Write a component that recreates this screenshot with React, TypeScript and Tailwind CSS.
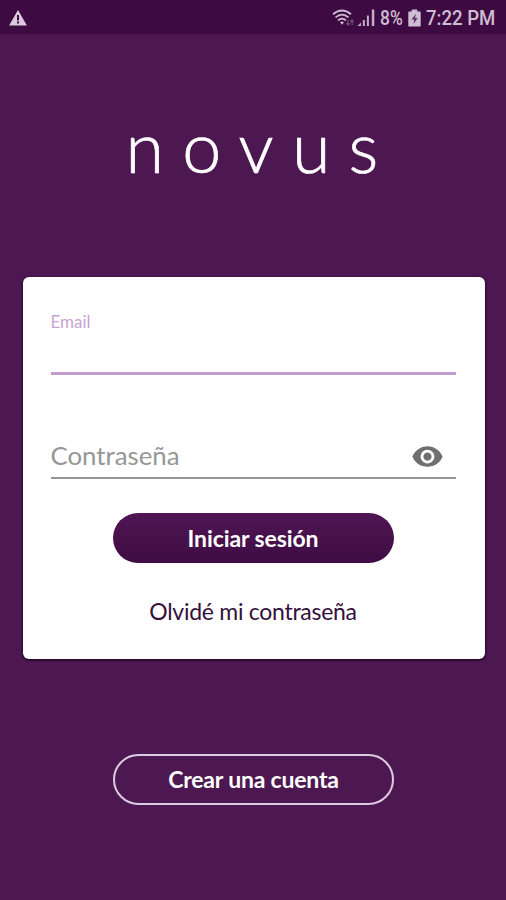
function WarningIcon() {
  return (
    <svg className="w-[18px] h-4" viewBox="0 0 18 16">
      <path d="M9 0 17.900 15.500H0.100z" fill="#dccbe0" />
      <path d="M8 5h2v5.500H8zM8 11.500h2v2H8z" fill="#3d0a42" />
    </svg>
  );
}

function WifiIcon() {
  return (
    <svg className="w-[23px] h-[18px]" viewBox="0 0 23 18" fill="none" stroke="#cdbbd1">
      <path d="M1 5.200Q10 -2.200 19 5.200" strokeWidth="1.800" />
      <path d="M3.500 8.400Q10 2.800 16.500 8.400" strokeWidth="1.800" />
      <path d="M6 11.400Q10 7.800 14 11.400" strokeWidth="1.800" />
      <path d="M8 13.200Q10 11.800 12 13.200L10 15.800z" fill="#cdbbd1" stroke="none" />
      <path d="M16 11v5M14.500 14.300 16 16l1.500-1.700M20 16v-5M18.500 12.700 20 11l1.500 1.700" stroke="#765079" strokeWidth="1.300" />
    </svg>
  );
}

function SignalIcon() {
  return (
    <svg className="w-[18px] h-[18px]" viewBox="0 0 18 18" fill="#c3aec7">
      <path d="M0.500 17 4 13.500V17z" />
      <path d="M5.800 11h2v6h-2z" />
      <path d="M9.900 6.500h2V17h-2z" />
      <path d="M14.800 0.500H17.300V17h-2.500z" />
    </svg>
  );
}

function BatteryIcon() {
  return (
    <svg className="w-[13px] h-[18px]" viewBox="0 0 13 18">
      <path d="M3.700 0.500h5.600v2H12a.7.7 0 0 1 .7.7v13.600a.7.7 0 0 1-.7.7H1a.7.7 0 0 1-.7-.7V3.200a.7.7 0 0 1 .7-.7h2.700z" fill="#cfbdd3" />
      <path d="M8 4.800 3.500 10.500h2.800L5.300 15l4.400-5.900H7z" fill="#5d3062" />
    </svg>
  );
}

function EyeIcon() {
  return (
    <svg className="w-[33px] h-[33px]" viewBox="0 0 24 24" fill="#6f6f6f">
      <path d="M12 4.500C7 4.500 2.730 7.610 1 12c1.730 4.390 6 7.500 11 7.500s9.270-3.110 11-7.500c-1.730-4.390-6-7.500-11-7.500zM12 17c-2.760 0-5-2.240-5-5s2.240-5 5-5 5 2.240 5 5-2.240 5-5 5zm0-8c-1.660 0-3 1.340-3 3s1.340 3 3 3 3-1.340 3-3-1.340-3-3-3z" />
    </svg>
  );
}

function StatusBar() {
  return (
    <header className="flex h-[34px] items-center justify-between bg-[#3d0a42] pl-[9px] pr-[10px] pt-px font-[Roboto,sans-serif] text-[20px] font-medium text-[#cfbdd3]">
      <WarningIcon />
      <div className="flex items-center">
        <WifiIcon />
        <div className="ml-0.5">
          <SignalIcon />
        </div>
        <span className="ml-[5px] w-[25px] origin-left scale-x-[0.87]">8%</span>
        <div className="ml-[3px]">
          <BatteryIcon />
        </div>
        <span className="ml-[5px] w-[70px] origin-left scale-x-[0.93] whitespace-nowrap">7:22 PM</span>
      </div>
    </header>
  );
}

export default function App() {
  return (
    <div className="flex h-[900px] w-[506px] flex-col overflow-hidden bg-[#4d1851] font-[Lato,sans-serif]">
      <StatusBar />
      <main className="flex flex-1 flex-col items-center">
        <h1 className="mt-[70px] h-[84px] pl-4 text-[70px] font-light leading-[84px] tracking-[18.2px] text-white [-webkit-text-stroke:0.7px_white]">
          novus
        </h1>

        <form className="mt-[89px] ml-px flex h-[382px] w-[462px] flex-col rounded-[6px] bg-white pl-7 pr-[29px] shadow-[0_1px_2px_1px_rgba(25,0,30,0.65)]">
          <label className="mt-[35px] h-5 text-[17px] leading-5 text-[#c9a3cd]">Email</label>
          <div className="mt-10 h-[3px] bg-[#c49ccb]" />

          <div className="mt-16 flex h-[34px] items-center justify-between pr-[12px]">
            <span className="-mt-0.5 text-[25.8px] leading-[34px] text-[#969696]">Contraseña</span>
            <EyeIcon />
          </div>
          <div className="mt-1 h-[2px] bg-[#959595]" />

          <button
            type="button"
            className="mt-[34px] h-[50px] w-[281px] self-center rounded-full bg-linear-to-b from-[#4f1653] to-[#3f0c44] text-[23px] font-bold tracking-[-0.1px] text-white"
          >
            Iniciar sesión
          </button>
          <a className="mt-[33px] self-center text-[23px] leading-[30px] tracking-[-0.27px] text-[#35103c]">
            Olvidé mi contraseña
          </a>
        </form>

        <button
          type="button"
          className="mt-[95px] ml-px h-[51px] w-[281px] rounded-full border-2 border-[#dccbe0] text-[23px] font-bold tracking-[-0.2px] text-white"
        >
          Crear una cuenta
        </button>
      </main>
    </div>
  );
}
